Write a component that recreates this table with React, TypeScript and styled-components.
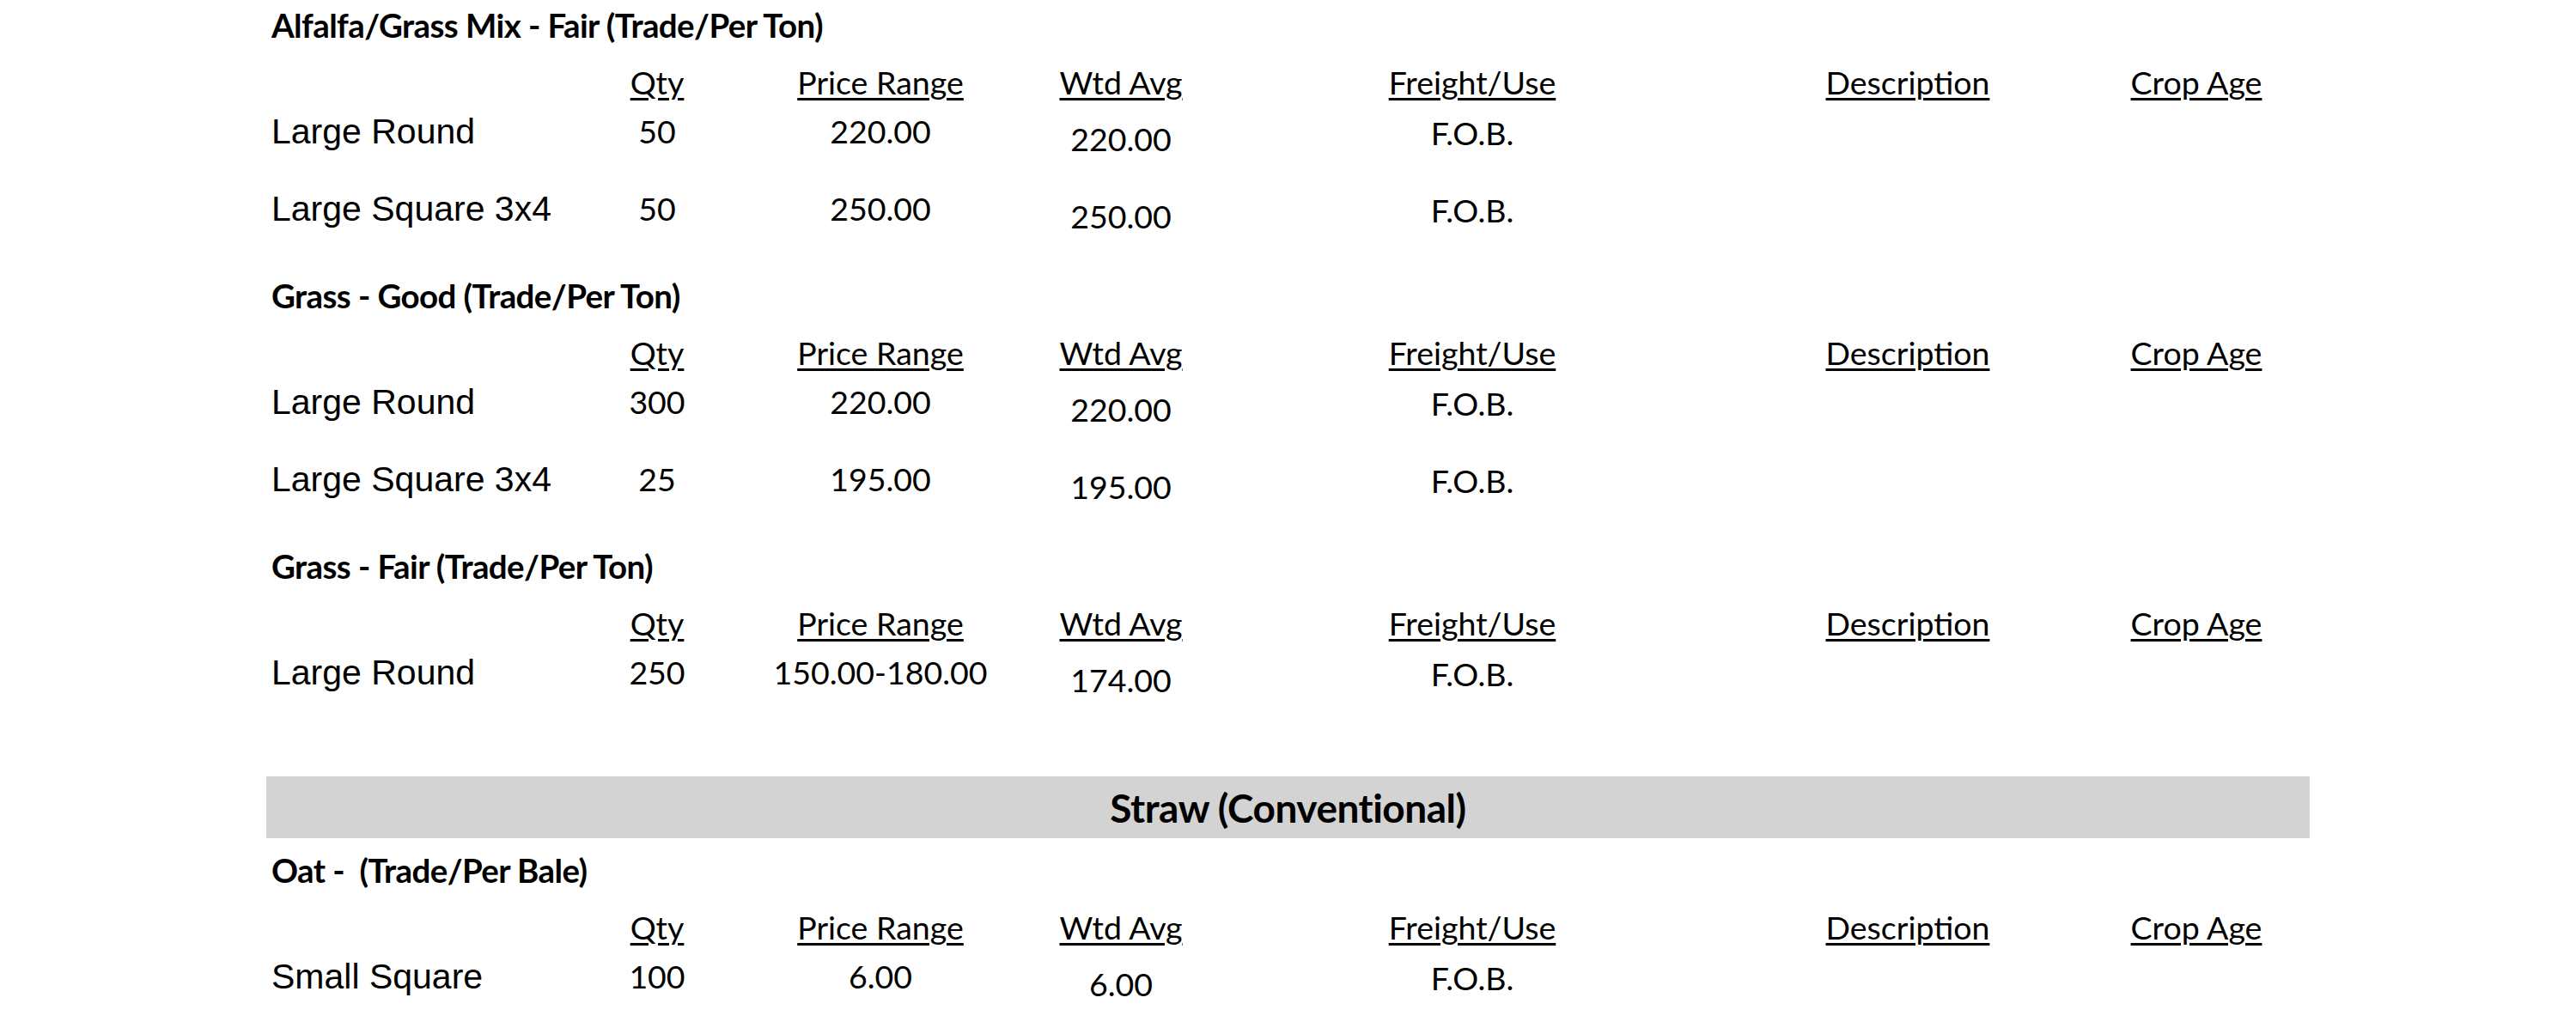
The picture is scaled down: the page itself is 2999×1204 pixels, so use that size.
import styled, { createGlobalStyle } from 'styled-components';

const GlobalStyle = createGlobalStyle`
  body {
    margin: 0;
    background: #ffffff;
    color: #000000;
  }
`;

const Page = styled.div`
  width: 2999px;
`;

const Section = styled.section`
  margin-bottom: 10px;
`;

const Title = styled.div`
  padding-left: 316px;
  height: 58px;
  line-height: 58px;
  font-family: Lato, 'Open Sans', sans-serif;
  font-weight: 700;
  font-size: 38.5px;
  letter-spacing: -0.6px;
  white-space: pre;
`;

const Grid = styled.div`
  display: grid;
  grid-template-columns: 369px 160px 360px 200px 618px 396px 276px;
  padding-left: 316px;
`;

const HeaderRow = styled(Grid)`
  margin-top: 9px;
  height: 58px;
  align-items: center;
`;

const HeaderCell = styled.span`
  text-align: center;
  font-family: Lato, 'Open Sans', sans-serif;
  font-size: 37.5px;
  line-height: 58px;
  text-decoration: underline;
  text-decoration-thickness: 3px;
  text-underline-offset: 4px;
`;

const DataRow = styled(Grid)`
  height: 90px;
  align-items: start;
`;

const Label = styled.span`
  font-family: 'Liberation Sans', Arial, sans-serif;
  font-size: 41px;
  line-height: 56px;
  white-space: nowrap;
`;

const Value = styled.span<{ $drop?: number }>`
  text-align: center;
  font-family: Lato, 'Open Sans', sans-serif;
  font-size: 37.5px;
  line-height: 56px;
  padding-top: ${(p) => p.$drop ?? 0}px;
  white-space: nowrap;
`;

const Band = styled.div`
  margin: 59px 0 8px 310px;
  width: 2379px;
  height: 72px;
  background: #d3d3d3;
  display: flex;
  align-items: center;
  justify-content: center;
  font-family: Lato, 'Open Sans', sans-serif;
  font-weight: 700;
  font-size: 46px;
  letter-spacing: -0.5px;
`;

type Row = {
  label: string;
  qty: string;
  price: string;
  avg: string;
  freight: string;
};

type Group = { title: string; rows: Row[] };

const hay: Group[] = [
  {
    title: 'Alfalfa/Grass Mix - Fair (Trade/Per Ton)',
    rows: [
      { label: 'Large Round', qty: '50', price: '220.00', avg: '220.00', freight: 'F.O.B.' },
      { label: 'Large Square 3x4', qty: '50', price: '250.00', avg: '250.00', freight: 'F.O.B.' },
    ],
  },
  {
    title: 'Grass - Good (Trade/Per Ton)',
    rows: [
      { label: 'Large Round', qty: '300', price: '220.00', avg: '220.00', freight: 'F.O.B.' },
      { label: 'Large Square 3x4', qty: '25', price: '195.00', avg: '195.00', freight: 'F.O.B.' },
    ],
  },
  {
    title: 'Grass - Fair (Trade/Per Ton)',
    rows: [
      { label: 'Large Round', qty: '250', price: '150.00-180.00', avg: '174.00', freight: 'F.O.B.' },
    ],
  },
];

const straw: Group[] = [
  {
    title: 'Oat -  (Trade/Per Bale)',
    rows: [
      { label: 'Small Square', qty: '100', price: '6.00', avg: '6.00', freight: 'F.O.B.' },
    ],
  },
];

const headers = ['Qty', 'Price Range', 'Wtd Avg', 'Freight/Use', 'Description', 'Crop Age'];

function GroupTable({ title, rows }: Group) {
  return (
    <Section>
      <Title>{title}</Title>
      <HeaderRow>
        <span />
        {headers.map((h) => (
          <HeaderCell key={h}>{h}</HeaderCell>
        ))}
      </HeaderRow>
      {rows.map((r, i) => (
        <DataRow key={i}>
          <Label>{r.label}</Label>
          <Value>{r.qty}</Value>
          <Value>{r.price}</Value>
          <Value $drop={9}>{r.avg}</Value>
          <Value $drop={2}>{r.freight}</Value>
          <Value />
          <Value />
        </DataRow>
      ))}
    </Section>
  );
}

export default function App() {
  return (
    <Page>
      <GlobalStyle />
      {hay.map((g) => (
        <GroupTable key={g.title} {...g} />
      ))}
      <Band>Straw (Conventional)</Band>
      {straw.map((g) => (
        <GroupTable key={g.title} {...g} />
      ))}
    </Page>
  );
}
